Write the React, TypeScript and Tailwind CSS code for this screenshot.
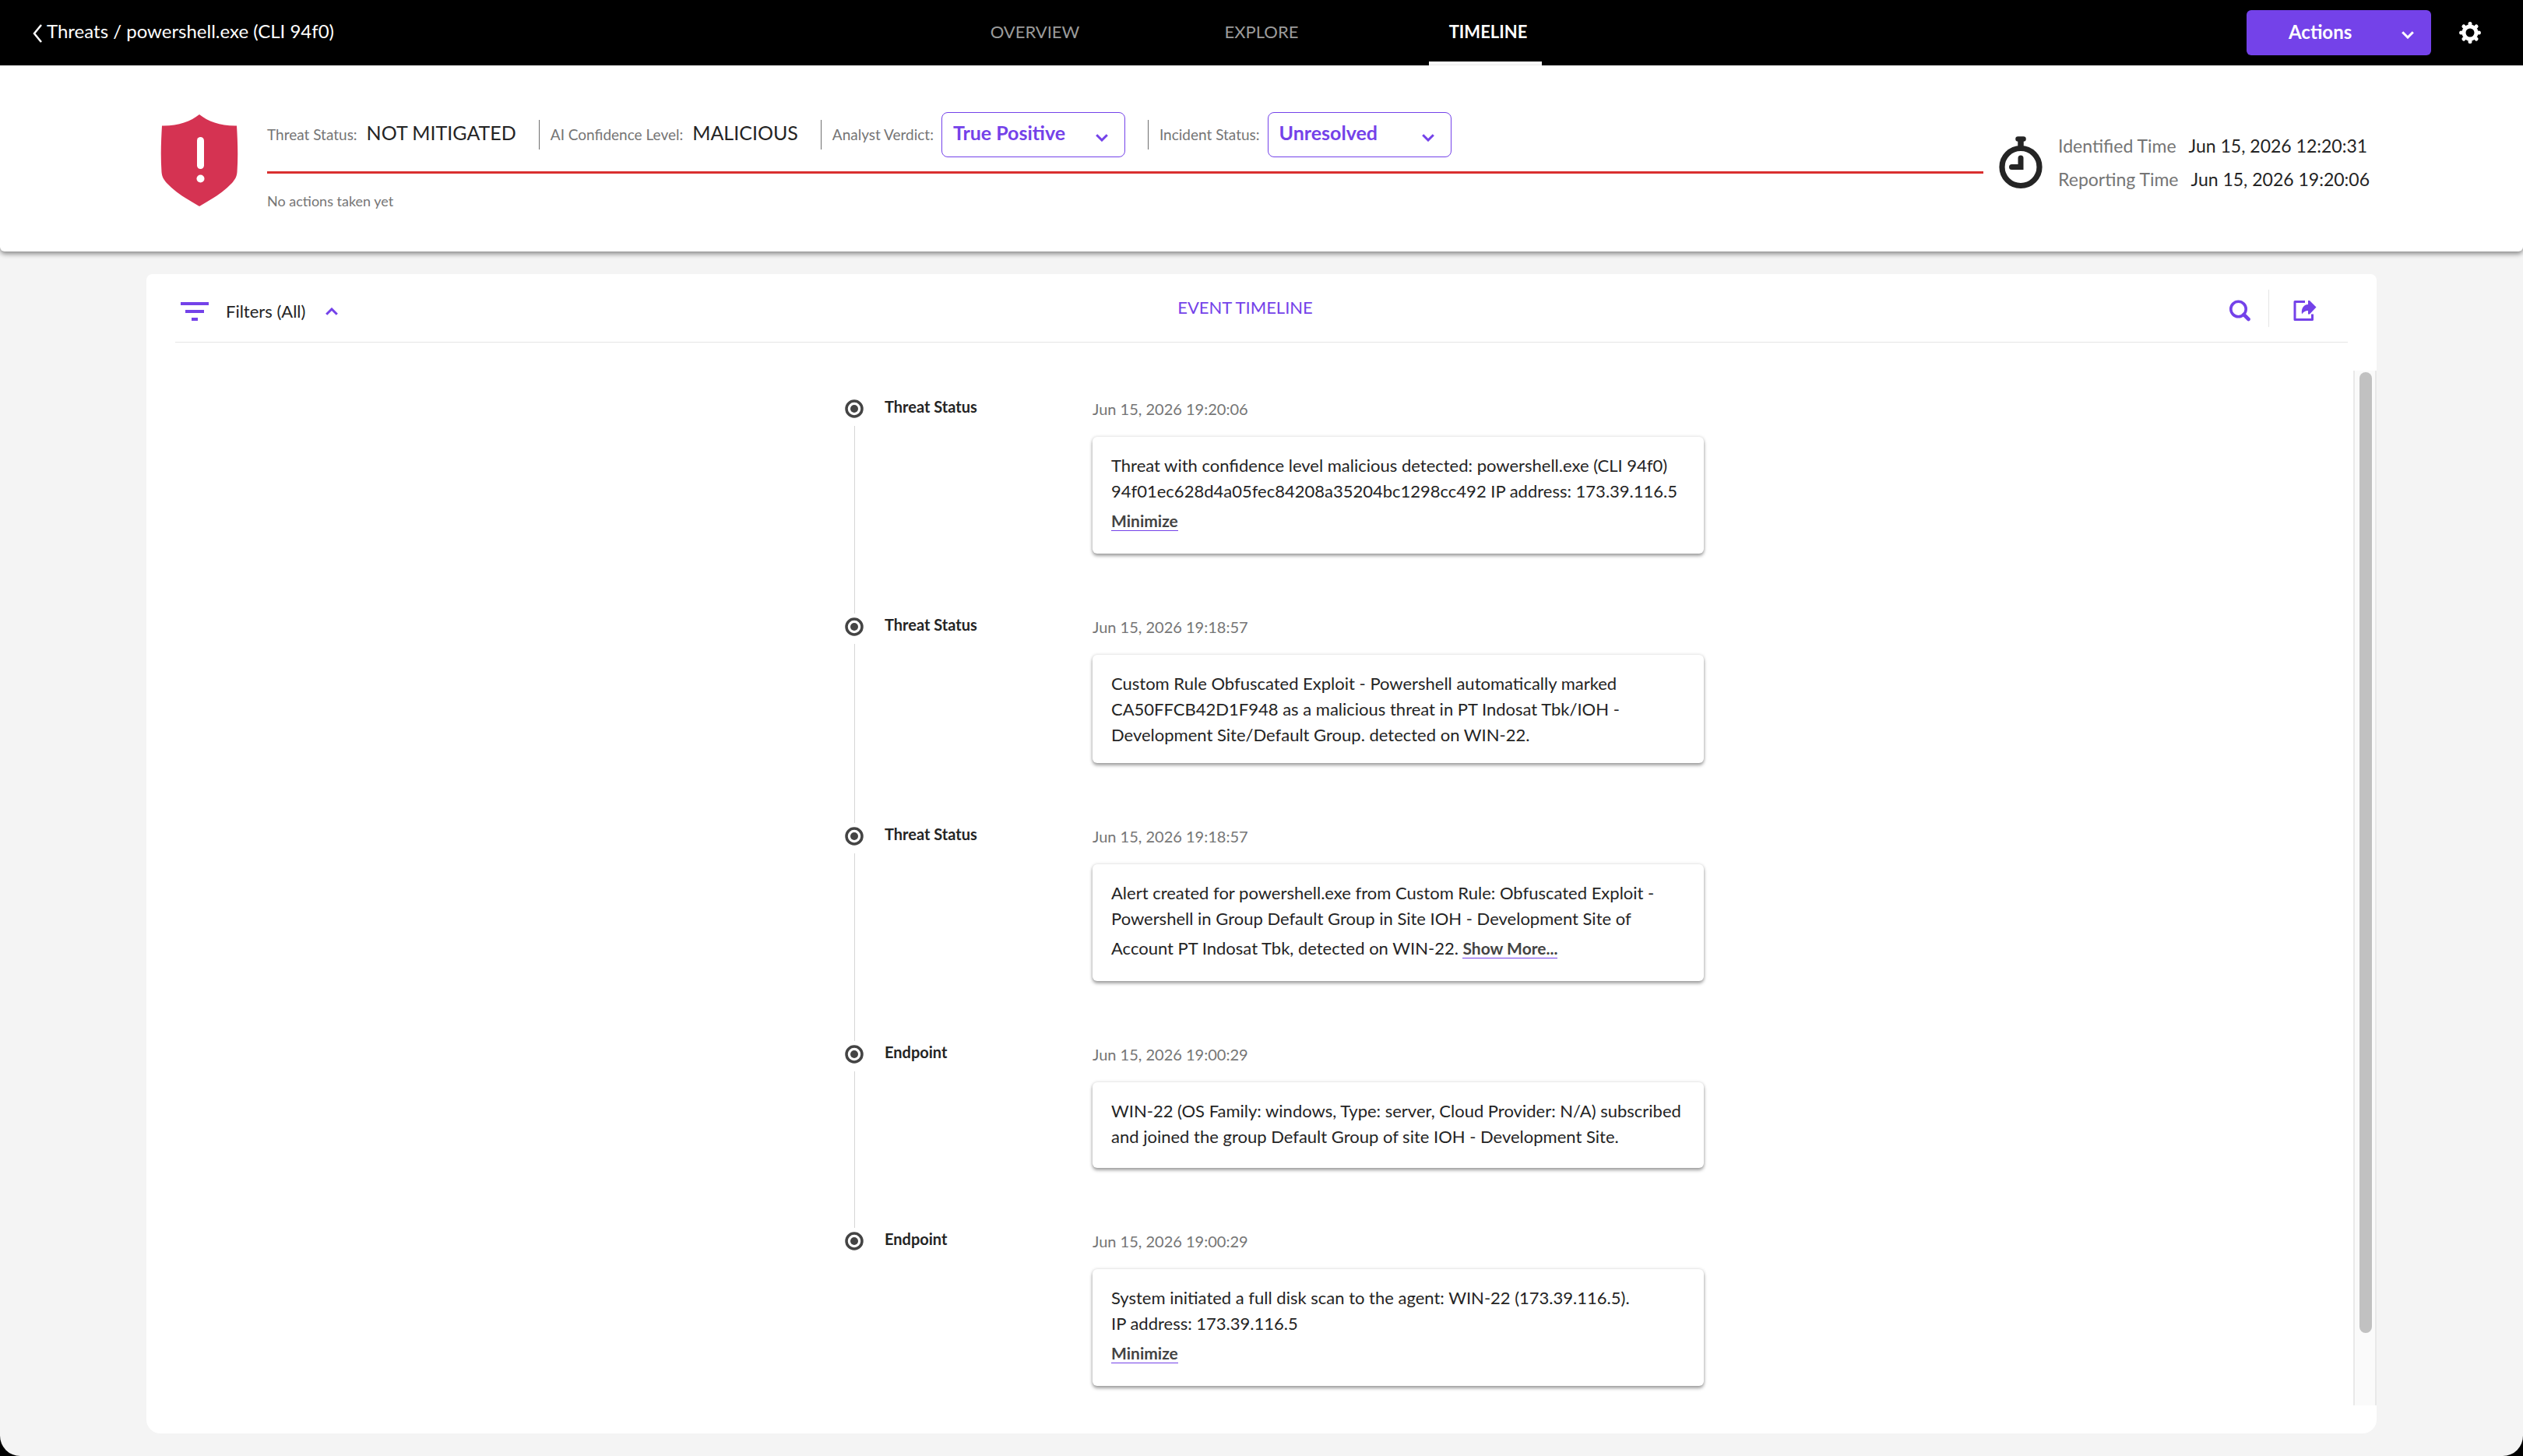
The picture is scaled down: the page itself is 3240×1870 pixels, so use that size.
import { useState } from 'react';

type TimelineEvent = {
  kind: string
  time: string
  text: string
  cta?: string
}

const tabs = ['OVERVIEW', 'EXPLORE', 'TIMELINE']

const events: TimelineEvent[] = [
  {
    kind: 'Threat Status',
    time: 'Jun 15, 2026 19:20:06',
    text: 'Threat with confidence level malicious detected: powershell.exe (CLI 94f0) 94f01ec628d4a05fec84208a35204bc1298cc492 IP address: 173.39.116.5\n',
    cta: 'Minimize',
  },
  {
    kind: 'Threat Status',
    time: 'Jun 15, 2026 19:18:57',
    text: 'Custom Rule Obfuscated Exploit - Powershell automatically marked CA50FFCB42D1F948 as a malicious threat in PT Indosat Tbk/IOH - Development Site/Default Group. detected on WIN-22.',
  },
  {
    kind: 'Threat Status',
    time: 'Jun 15, 2026 19:18:57',
    text: 'Alert created for powershell.exe from Custom Rule: Obfuscated Exploit - Powershell in Group Default Group in Site IOH - Development Site of Account PT Indosat Tbk, detected on WIN-22. ',
    cta: 'Show More...',
  },
  {
    kind: 'Endpoint',
    time: 'Jun 15, 2026 19:00:29',
    text: 'WIN-22 (OS Family: windows, Type: server, Cloud Provider: N/A) subscribed and joined the group Default Group of site IOH - Development Site.',
  },
  {
    kind: 'Endpoint',
    time: 'Jun 15, 2026 19:00:29',
    text: 'System initiated a full disk scan to the agent: WIN-22 (173.39.116.5).\nIP address: 173.39.116.5\n',
    cta: 'Minimize',
  },
]

function Chevron({ className }: { className: string }) {
  return (
    <svg viewBox="0 0 16 10" className={className} fill="none" stroke="currentColor" strokeWidth="3">
      <path d="M1.2 1.2 8 8 14.8 1.2" />
    </svg>
  )
}

function ShieldIcon() {
  return (
    <svg viewBox="0 0 100 118" className="w-[100px] h-[118px] shrink-0">
      <path fill="#d53352" d="M50 0C61 9 78 15 98 14.500C99 32 100 52 98.500 74C98 80 96 83 92 88C80 101 65 109 50 118C35 109 20 101 8 88C4 83 2 80 1.500 74C0 52 1 32 2 14.500C22 15 39 9 50 0Z" />
      <rect x="47" y="29" width="9" height="41" rx="4.500" fill="#fff" />
      <circle cx="51.500" cy="82.500" r="5" fill="#fff" />
    </svg>
  )
}

function ClockIcon() {
  return (
    <svg viewBox="0 0 56 68" className="w-14 h-[68px] shrink-0" fill="none" stroke="#242424">
      <circle cx="28" cy="39.500" r="24" strokeWidth="7.200" />
      <path d="M28 5V14" strokeWidth="7.500" />
      <path d="M24.500 3.500H31.500" strokeWidth="6.500" strokeLinecap="round" />
      <path d="M28 28V39.500H16.500" strokeWidth="7" strokeLinecap="round" />
    </svg>
  )
}

function GearIcon() {
  return (
    <svg viewBox="0 0 28 28" className="size-7" fill="none" stroke="#fff">
      <circle cx="14" cy="14" r="8" strokeWidth="5" />
      {[0, 45, 90, 135].map((a) => (
        <path key={a} d="M14 3V2.600M14 25V25.400" strokeWidth="5" strokeLinecap="round" transform={`rotate(${a} 14 14)`} />
      ))}
    </svg>
  )
}

function FilterIcon() {
  return (
    <svg viewBox="0 0 36 24" className="w-9 h-6" fill="#7442e9">
      <path d="M0 0H36V4H0ZM6 10H30V14H6ZM14 20H22V24H14Z" />
    </svg>
  )
}

function SearchIcon() {
  return (
    <svg viewBox="0 0 28 28" className="size-7 mt-1.5" fill="none" stroke="#7442e9">
      <circle cx="11.500" cy="12" r="9.700" strokeWidth="3.600" />
      <path d="M18.500 19 24.500 25" strokeWidth="4.600" strokeLinecap="round" />
    </svg>
  )
}

function ShareIcon() {
  return (
    <svg viewBox="0 0 30 28" className="w-[30px] h-7 mt-1.5" fill="none">
      <path d="M15 2.500H2V25.500H24.500V18.500" stroke="#7442e9" strokeWidth="3" strokeLinejoin="round" />
      <path d="M19 1H21L29.500 9.500 21 18.500H19V14C15.500 14 13 15.500 11 18.500C10 11 13 6.500 19 6Z" fill="#7442e9" />
    </svg>
  )
}

function StatusSelect({ id, label, value, options }: { id: string, label: string, value: string, options: string[] }) {
  return (
    <div className="flex items-center">
      <label htmlFor={id} className="text-[19px] text-[#757575] mr-2.5">{label}</label>
      <div className="relative">
        <select id={id} defaultValue={value} className="appearance-none block w-[236px] h-[58px] border border-[#7442e9] rounded-lg pl-3.5 pb-1 text-[25px] font-bold text-[#7442e9] bg-white">
          {options.map((o) => <option key={o}>{o}</option>)}
        </select>
        <Chevron className="absolute right-[22px] top-7 w-4 h-2.5 text-[#7442e9] pointer-events-none" />
      </div>
    </div>
  )
}

function Divider() {
  return <div className="w-px h-[38px] bg-[#6f6f6f] ml-[29px] mr-3.5"></div>
}

function TopBar() {
  const [active, setActive] = useState<string>('TIMELINE')

  return (
    <header className="grid grid-cols-[1fr_auto_1fr] items-center h-[84px] bg-black text-white">
      <a href="#threats" className="flex items-center pl-[42px] pb-1 gap-1.5 text-2xl">
        <svg viewBox="0 0 12 24" className="w-3 h-6 mt-1.5" fill="none" stroke="currentColor" strokeWidth="2.500">
          <path d="M11 1 2 12 11 23" />
        </svg>
        <span>Threats / powershell.exe (CLI 94f0)</span>
      </a>
      <nav className="flex gap-[146px] h-full mr-2">
        {tabs.map((t) => (
          <button
            key={t}
            onClick={() => setActive(t)}
            className={t === active
              ? 'w-[145px] pt-px pl-2 text-[22px] font-bold border-b-[5px] border-white'
              : 'w-[145px] pt-px pl-2 text-[22px] text-[#9b9b9b] border-b-[5px] border-transparent'}
          >
            {t}
          </button>
        ))}
      </nav>
      <div className="flex items-center justify-end pr-[54px] gap-9">
        <button className="flex items-center justify-between w-[237px] h-[58px] rounded-md bg-[#7442e9] pl-[54px] pr-[22px] pb-0.5 text-2xl font-bold">
          Actions
          <Chevron className="w-4 h-2.5 mt-2" />
        </button>
        <button aria-label="Settings"><GearIcon /></button>
      </div>
    </header>
  )
}

function StatusBar() {
  return (
    <section className="relative z-10 flex items-start h-[239px] pl-[206px] pr-[197px] pt-[60px] bg-white rounded-b-md shadow-[0_3px_6px_rgba(0,0,0,0.45)]">
      <div className="mt-[3px]"><ShieldIcon /></div>
      <div className="flex-1 ml-[37px] mr-5">
        <div className="flex items-center h-[58px]">
          <div className="flex items-baseline pb-1">
            <span className="text-[19px] text-[#757575] mr-3">Threat Status:</span>
            <span className="text-[25px] text-[#242424]">NOT MITIGATED</span>
          </div>
          <Divider />
          <div className="flex items-baseline pb-1">
            <span className="text-[19px] text-[#757575] mr-3">AI Confidence Level:</span>
            <span className="text-[25px] text-[#242424]">MALICIOUS</span>
          </div>
          <Divider />
          <StatusSelect id="verdict" label="Analyst Verdict:" value="True Positive" options={['True Positive', 'False Positive', 'Suspicious', 'Undefined']} />
          <Divider />
          <StatusSelect id="incident" label="Incident Status:" value="Unresolved" options={['Unresolved', 'In Progress', 'Resolved']} />
        </div>
        <div className="h-[3px] bg-[#d92f2f] mt-[18px]"></div>
        <div className="mt-[21px] text-lg text-[#757575]">No actions taken yet</div>
      </div>
      <div className="flex items-center gap-5 mt-[22px]">
        <ClockIcon />
        <div className="text-[23px] leading-[43px] text-[#242424]">
          <div className="flex gap-4"><span className="text-[#757575]">Identified Time</span><span>Jun 15, 2026 12:20:31</span></div>
          <div className="flex gap-4"><span className="text-[#757575]">Reporting Time</span><span>Jun 15, 2026 19:20:06</span></div>
        </div>
      </div>
    </section>
  )
}

function EventRow({ event, last }: { event: TimelineEvent, last: boolean }) {
  return (
    <li className="flex">
      <div className="flex flex-col items-center w-6 mr-[27px]">
        <svg viewBox="0 0 24 24" className="size-6 mt-px shrink-0">
          <circle cx="12" cy="12" r="10" fill="none" stroke="#444" strokeWidth="3.500" />
          <circle cx="12" cy="12" r="5" fill="#444" />
        </svg>
        {!last && <div className="w-px flex-1 bg-[#d6d6d6] mt-2.5 mb-1"></div>}
      </div>
      <div className="w-[267px] text-xl leading-6 font-bold text-[#242424] -mt-0.5">{event.kind}</div>
      <div className={last ? 'w-[785px]' : 'w-[785px] pb-[81px]'}>
        <div className="text-xl leading-[26px] text-[#757575]">{event.time}</div>
        <div className="mt-[23px] min-h-[110px] px-6 py-5 rounded-md bg-white shadow-[0_0_4px_rgba(0,0,0,0.15),0_3px_4px_rgba(0,0,0,0.35)] text-[22px] leading-[33px] text-[#242424] whitespace-pre-line">
          {event.text}
          {event.cta && <a href="#event" className="text-[21px] leading-[44px] font-bold text-[#444] border-b border-[#7442e9]">{event.cta}</a>}
        </div>
      </div>
    </li>
  )
}

function App() {
  return (
    <div className="flex flex-col min-h-screen bg-black font-['Lato',sans-serif]">
      <TopBar />
      <div className="flex flex-col flex-1 bg-[#f4f4f4] rounded-b-[26px]">
        <StatusBar />
        <main className="flex flex-col flex-1 mx-[188px] my-[29px] bg-white rounded-t-lg rounded-b-[18px]">
          <div className="grid grid-cols-[1fr_auto_1fr] items-center h-[88px] mx-[37px] border-b border-[#e6e6e6] text-[22px]">
            <button className="flex items-center pl-[7px] mt-2 text-[#242424]">
              <FilterIcon />
              <span className="ml-[22px] mr-[26px]">Filters (All)</span>
              <Chevron className="w-4 h-2.5 rotate-180 text-[#7442e9]" />
            </button>
            <h2 className="mr-[42px] pb-0.5 text-[#7442e9]">EVENT TIMELINE</h2>
            <div className="flex items-center justify-end pr-10">
              <button aria-label="Search"><SearchIcon /></button>
              <div className="w-px h-12 ml-[22px] mr-[31px] bg-[#e6e6e6]"></div>
              <button aria-label="Export"><ShareIcon /></button>
            </div>
          </div>
          <div className="flex flex-1 my-9">
            <ul className="flex-1 pl-[897px] pt-9">
              {events.map((e, i) => <EventRow key={i} event={e} last={i === events.length - 1} />)}
            </ul>
            <div className="w-[30px] pt-0.5 px-1 bg-[#fafafa] border-x-2 border-[#e9e9e9]">
              <div className="w-4 h-[93%] ml-0.5 rounded-full bg-[#c1c1c1]"></div>
            </div>
          </div>
        </main>
      </div>
    </div>
  )
}

export default App;
